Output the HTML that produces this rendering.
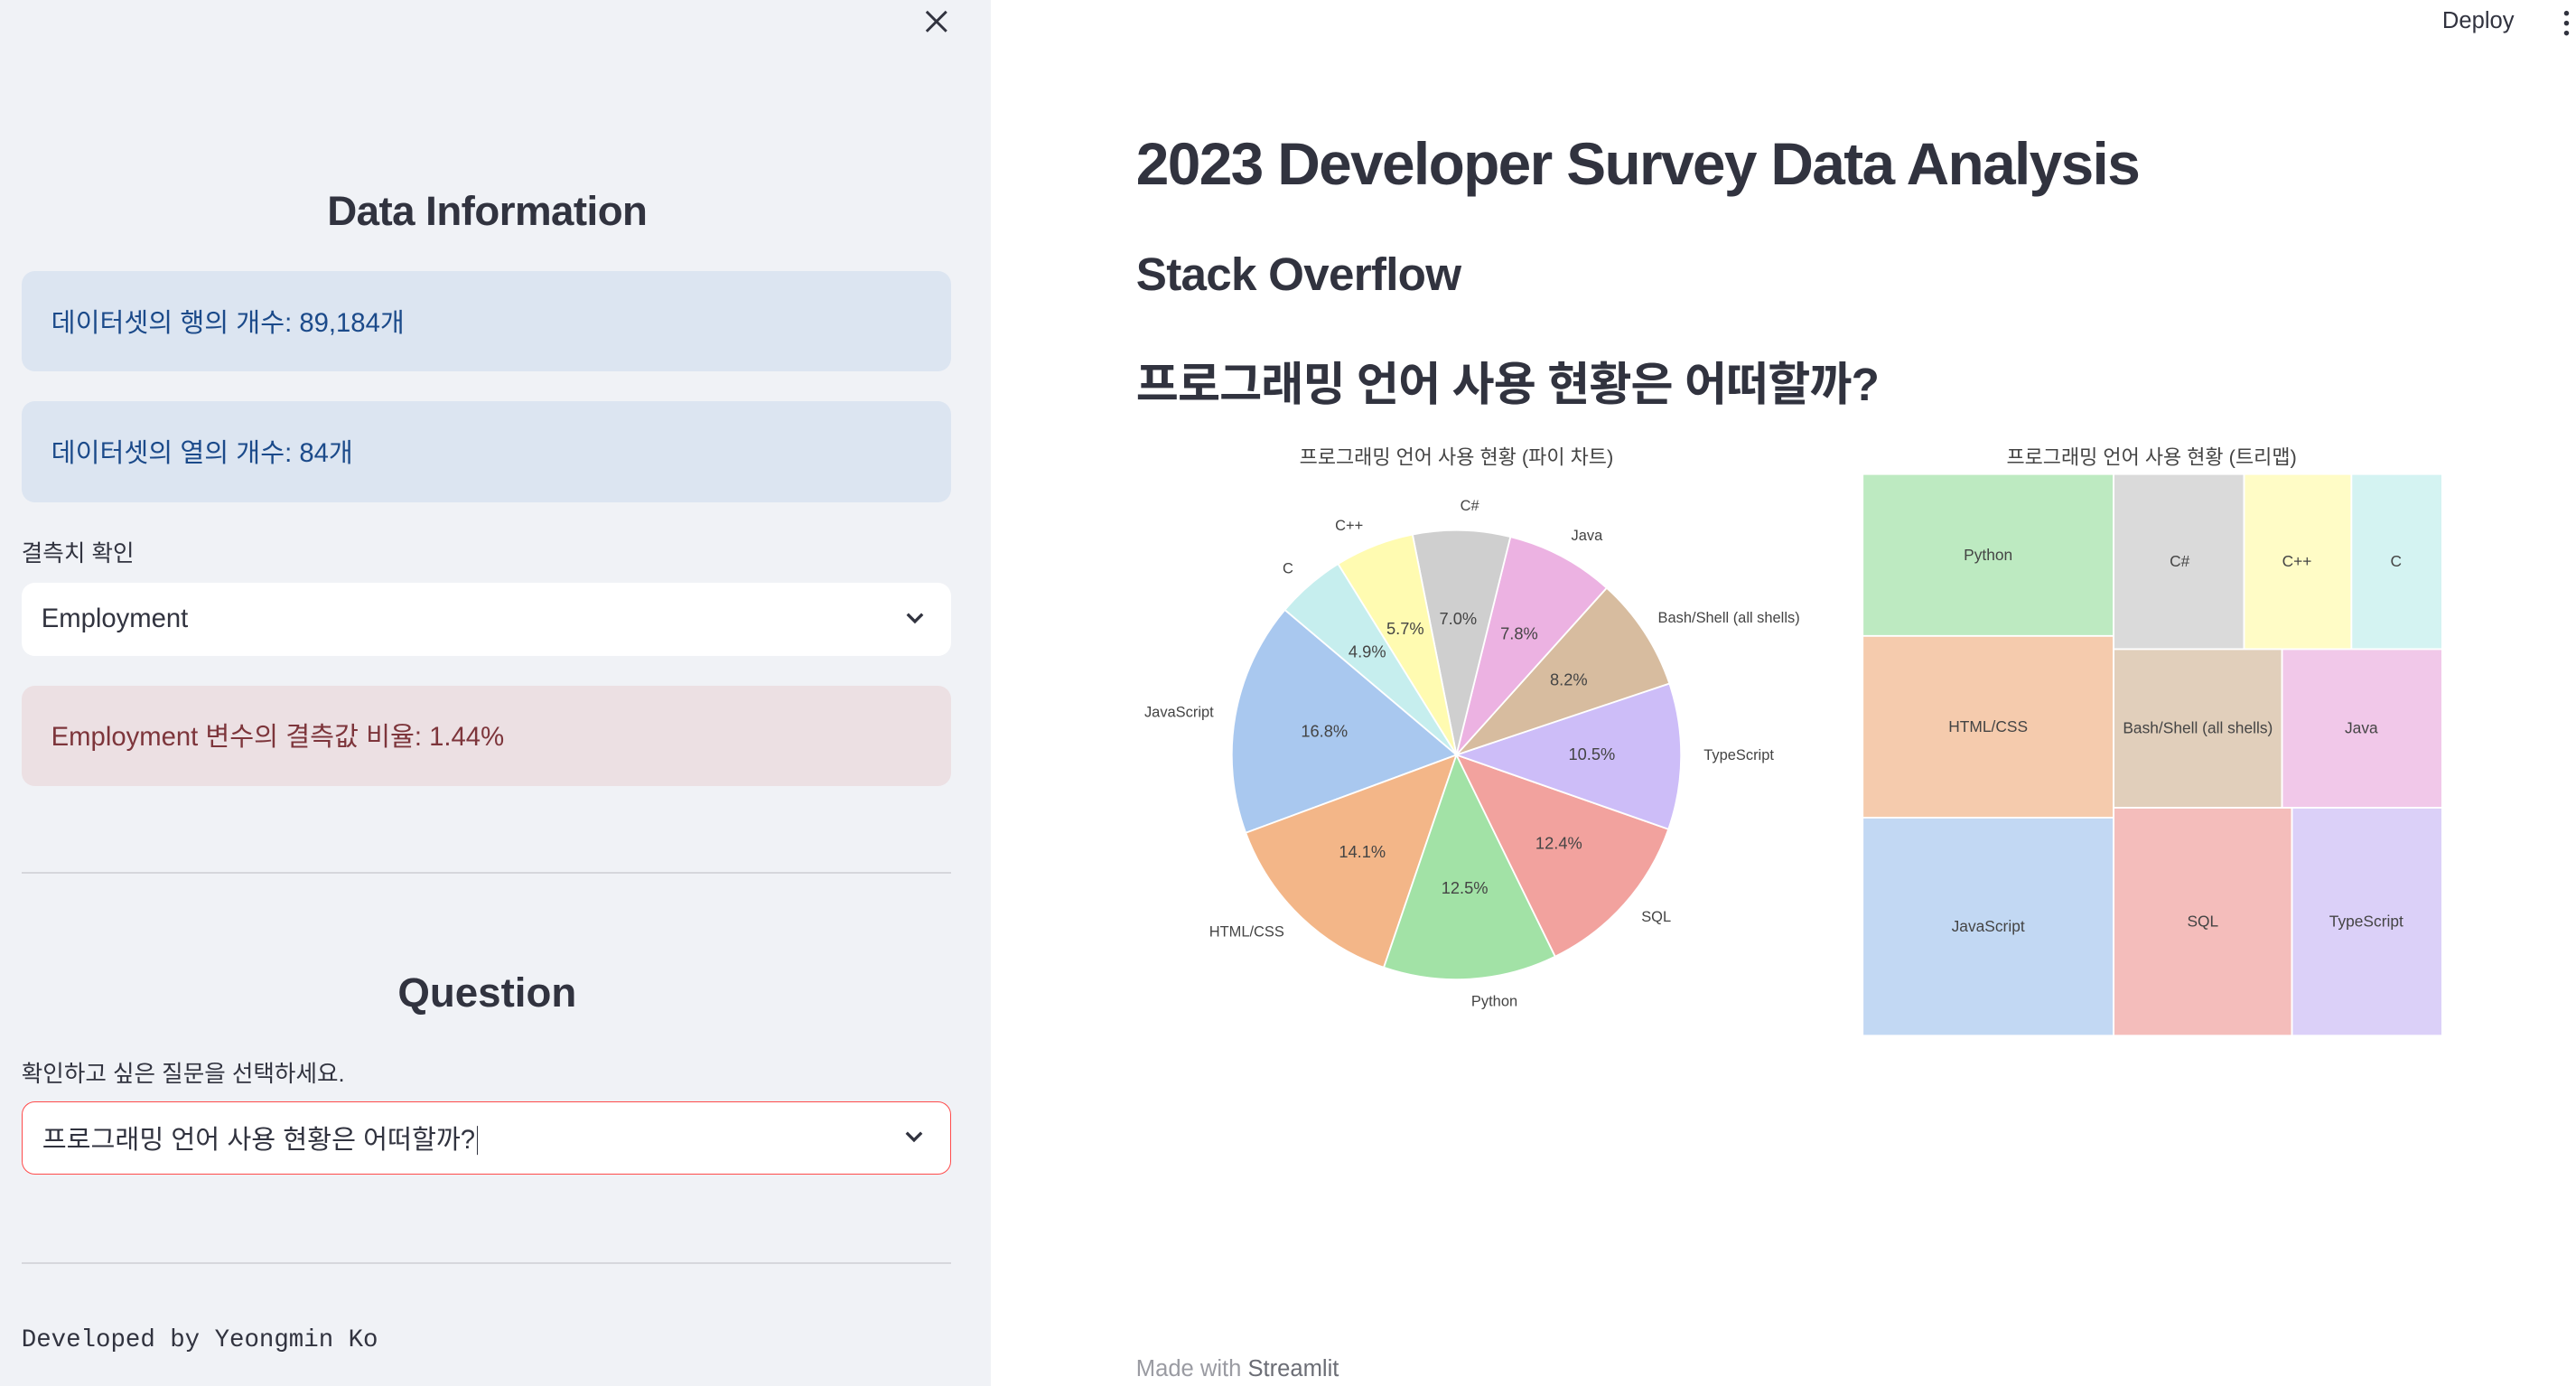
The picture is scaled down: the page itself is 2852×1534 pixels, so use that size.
<!DOCTYPE html>
<html><head><meta charset="utf-8">
<style>
html,body{margin:0;padding:0;background:#fff;overflow:hidden}
#root{zoom:1.8282;width:1560px;height:839px;position:relative;font-family:"Liberation Sans","Noto Sans CJK KR",sans-serif;color:#31333f}
.side{position:absolute;left:0;top:0;width:600px;height:839px;background:#f0f2f6}
.abs{position:absolute;white-space:nowrap}
.box{position:absolute;left:13px;width:563px;border-radius:8px}
.info{background:#dce5f1;color:#1b4a8a;font-size:16px}
.info span,.err span{position:absolute;left:18px;top:50%;transform:translateY(-52%)}
.err{background:#ece0e3;color:#7d353b;font-size:16px}
.sel{background:#fff;font-size:16px;color:#31333f}
.sel span{position:absolute;left:12px;top:50%;transform:translateY(-52%)}
.hr{position:absolute;left:13px;width:563px;height:1px;background:#d6d7dc}
.chev{position:absolute;right:16px;top:50%;margin-top:-5px}
</style></head><body><div id="root">
<div class="side">
  <svg class="abs" style="left:560px;top:6px" width="14" height="14" viewBox="0 0 14 14"><path d="M1 1L13 13M13 1L1 13" stroke="#31333f" stroke-width="1.6" fill="none"/></svg>
  <div class="abs" style="left:0;width:590px;text-align:center;top:114px;font-size:25px;font-weight:bold;letter-spacing:-0.3px">Data Information</div>
  <div class="box info" style="top:164px;height:61px"><span>데이터셋의 행의 개수: 89,184개</span></div>
  <div class="box info" style="top:243px;height:61px"><span>데이터셋의 열의 개수: 84개</span></div>
  <div class="abs" style="left:13px;top:324px;font-size:14px">결측치 확인</div>
  <div class="box sel" style="top:353px;height:44px"><span>Employment</span>
    <svg class="chev" width="12" height="9" viewBox="0 0 12 9"><path d="M1.5 2L6 6.5L10.5 2" stroke="#31333f" stroke-width="1.8" fill="none"/></svg></div>
  <div class="box err" style="top:415px;height:61px"><span>Employment 변수의 결측값 비율: 1.44%</span></div>
  <div class="hr" style="top:528px"></div>
  <div class="abs" style="left:0;width:590px;text-align:center;top:587px;font-size:25px;font-weight:bold">Question</div>
  <div class="abs" style="left:13px;top:639px;font-size:14px">확인하고 싶은 질문을 선택하세요.</div>
  <div class="box sel" style="top:667px;height:44px;border:1px solid #ff4b4b;box-sizing:border-box"><span>프로그래밍 언어 사용 현황은 어떠할까?<span style="position:static;border-left:1px solid #31333f;margin-left:1px"></span></span>
    <svg class="chev" width="12" height="9" viewBox="0 0 12 9"><path d="M1.5 2L6 6.5L10.5 2" stroke="#31333f" stroke-width="1.8" fill="none"/></svg></div>
  <div class="hr" style="top:764px"></div>
  <div class="abs" style="left:13px;top:803px;font-size:15px;font-family:'Liberation Mono',monospace">Developed by Yeongmin Ko</div>
</div>
<div class="abs" style="left:1479px;top:5px;font-size:14px">Deploy</div>
<svg class="abs" style="left:1551px;top:6px" width="6" height="16"><circle cx="3" cy="2" r="1.5" fill="#31333f"/><circle cx="3" cy="8" r="1.5" fill="#31333f"/><circle cx="3" cy="14" r="1.5" fill="#31333f"/></svg>
<div class="abs" style="left:688px;top:78px;font-size:36px;font-weight:bold;letter-spacing:-0.9px">2023 Developer Survey Data Analysis</div>
<div class="abs" style="left:688px;top:150px;font-size:28px;font-weight:bold;letter-spacing:-0.4px">Stack Overflow</div>
<div class="abs" style="left:688px;top:210px;font-size:28px;font-weight:bold;letter-spacing:-0.5px">프로그래밍 언어 사용 현황은 어떠할까?</div>
<svg class="abs" style="left:0;top:0" width="1560" height="839" font-family="Liberation Sans, Noto Sans CJK KR, sans-serif">
 <g stroke="#fff" stroke-width="1">
  <path d="M882 457L778.1 369.2A136 136 0 0 0 754.4 504.2Z" fill="#a9c8ef"/>
  <path d="M882 457L754.4 504.2A136 136 0 0 0 838 585.7Z" fill="#f3b688"/>
  <path d="M882 457L838 585.7A136 136 0 0 0 941.8 579.1Z" fill="#a2e2a6"/>
  <path d="M882 457L941.8 579.1A136 136 0 0 0 1010.4 502Z" fill="#f2a29e"/>
  <path d="M882 457L1010.4 502A136 136 0 0 0 1011 413.8Z" fill="#cdbdf8"/>
  <path d="M882 457L1011 413.8A136 136 0 0 0 973 355.9Z" fill="#d7bc9f"/>
  <path d="M882 457L973 355.9A136 136 0 0 0 914.7 325Z" fill="#ecb2e2"/>
  <path d="M882 457L914.7 325A136 136 0 0 0 855.4 323.6Z" fill="#cfcfcf"/>
  <path d="M882 457L855.4 323.6A136 136 0 0 0 810.3 341.4Z" fill="#fffbb1"/>
  <path d="M882 457L810.3 341.4A136 136 0 0 0 778.1 369.2Z" fill="#c6eeee"/>
 </g>
 <g font-size="10" fill="#444" text-anchor="middle">
  <text x="882" y="281" font-size="12">프로그래밍 언어 사용 현황 (파이 차트)</text>
  <text x="802" y="446">16.8%</text><text x="825" y="519">14.1%</text><text x="887" y="541">12.5%</text>
  <text x="944" y="514">12.4%</text><text x="964" y="460">10.5%</text><text x="950" y="415">8.2%</text>
  <text x="920" y="387">7.8%</text><text x="883" y="378">7.0%</text><text x="851" y="384">5.7%</text><text x="828" y="398">4.9%</text>
  <g font-size="9">
  <text x="714" y="434">JavaScript</text><text x="755" y="567">HTML/CSS</text><text x="905" y="609">Python</text>
  <text x="1003" y="558">SQL</text><text x="1053" y="460">TypeScript</text><text x="1047" y="377">Bash/Shell (all shells)</text>
  <text x="961" y="327">Java</text><text x="890" y="309">C#</text><text x="817" y="321">C++</text><text x="780" y="347">C</text>
  </g>
  <text x="1303" y="281" font-size="12">프로그래밍 언어 사용 현황 (트리맵)</text>
 </g>
 <g stroke="#fff" stroke-width="1">
  <rect x="1128" y="287" width="152" height="98" fill="#bdeac1"/>
  <rect x="1128" y="385" width="152" height="110" fill="#f5cbad"/>
  <rect x="1128" y="495" width="152" height="132" fill="#c2d8f3"/>
  <rect x="1280" y="287" width="79" height="106" fill="#dadada"/>
  <rect x="1359" y="287" width="65" height="106" fill="#fffcc6"/>
  <rect x="1424" y="287" width="55" height="106" fill="#d4f3f2"/>
  <rect x="1280" y="393" width="102" height="96" fill="#e1cfbb"/>
  <rect x="1382" y="393" width="97" height="96" fill="#f1c8e9"/>
  <rect x="1280" y="489" width="108" height="138" fill="#f4bdbb"/>
  <rect x="1388" y="489" width="91" height="138" fill="#dbd0f8"/>
 </g>
 <g font-size="9.5" fill="#444" text-anchor="middle">
  <text x="1204" y="339">Python</text><text x="1204" y="443">HTML/CSS</text><text x="1204" y="564">JavaScript</text>
  <text x="1320" y="343">C#</text><text x="1391" y="343">C++</text><text x="1451" y="343">C</text>
  <text x="1331" y="444">Bash/Shell (all shells)</text><text x="1430" y="444">Java</text>
  <text x="1334" y="561">SQL</text><text x="1433" y="561">TypeScript</text>
 </g>
</svg>
<div class="abs" style="left:688px;top:821px;font-size:14px;color:#9a9ba2">Made with <span style="color:#6b6d75">Streamlit</span></div>
</div></body></html>
